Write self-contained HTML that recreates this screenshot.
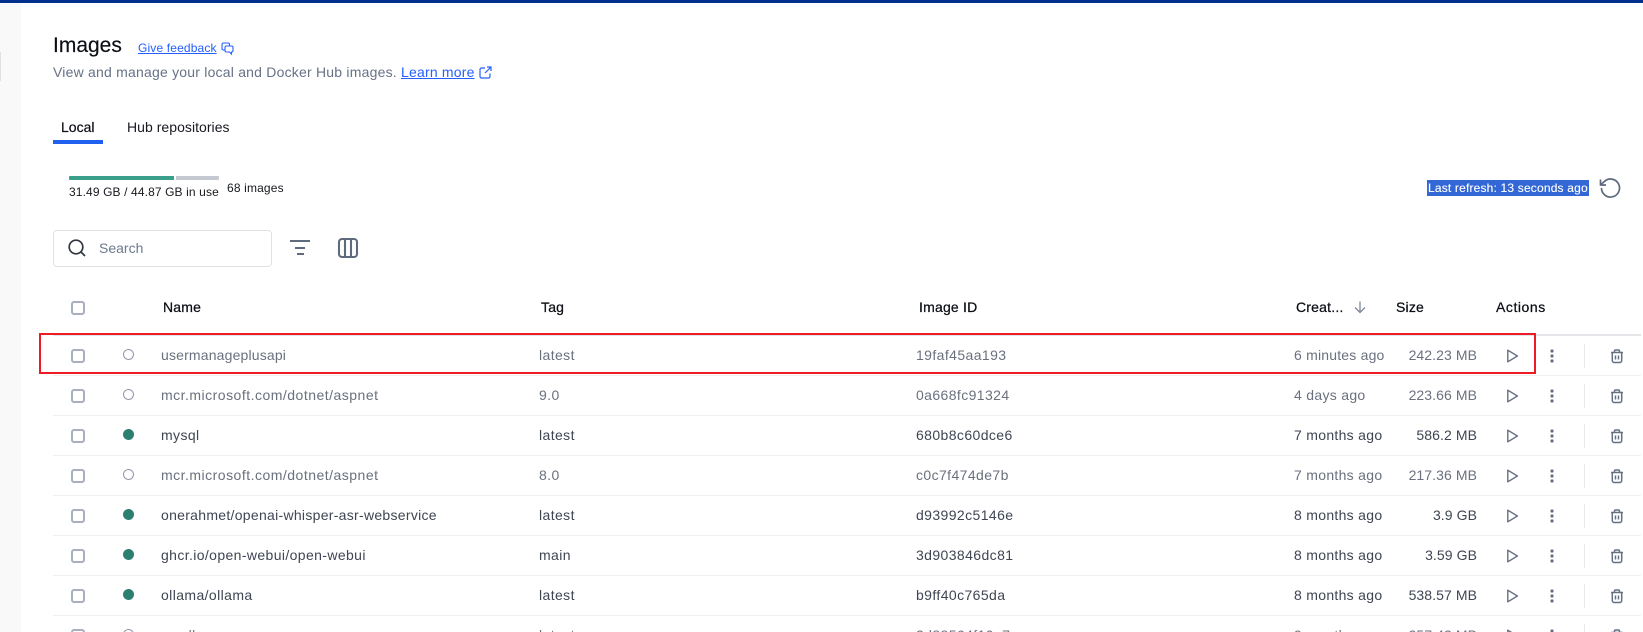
<!DOCTYPE html>
<html><head><meta charset="utf-8"><title>Images</title>
<style>
html,body{margin:0;padding:0;background:#fff;width:1643px;height:632px;overflow:hidden}
#p{position:absolute;left:0;top:0;width:1643px;height:632px;overflow:hidden;font-family:"Liberation Sans",Arial,sans-serif}
.a{position:absolute;white-space:nowrap}
.t{position:absolute;white-space:nowrap;line-height:20px;font-size:14px;letter-spacing:.4px;color:#3f4552}
.u{color:#6a707d}
.h{position:absolute;white-space:nowrap;top:297px;line-height:20px;font-size:14px;color:#0b0e14;-webkit-text-stroke:.25px #0b0e14;letter-spacing:.2px}
.line{position:absolute;left:53px;width:1588px;height:1px;background:#eeeff1}
.div{position:absolute;left:1584px;width:1px;height:24px;background:#e8e9ec}
.cb{position:absolute;left:71px;width:10px;height:10px;border:2px solid #a9afc0;border-radius:3px}
.dot{position:absolute;left:122.5px;width:11px;height:11px;border-radius:50%;box-sizing:border-box}
.on{background:#2c7f70}.off{border:1.3px solid #8f96a6;background:#fff}
.ic{position:absolute;overflow:visible}
.s{right:166px;letter-spacing:.08px}
.c{letter-spacing:.3px}
</style></head><body>
<div id="p">
<div class="a" style="left:0;top:0;width:1643px;height:3px;background:#00308f"></div>
<div class="a" style="left:0;top:3px;width:21px;height:629px;background:#f9f9fa"></div>
<div class="a" style="left:0;top:52px;width:1px;height:29px;background:#dfe0e4"></div>

<div class="a" style="left:53px;top:34px;font-size:21px;line-height:24px;color:#0b0e14;-webkit-text-stroke:.15px #0b0e14">Images</div>
<div class="a" style="left:138px;top:40px;font-size:12px;line-height:16px;color:#2560ff;text-decoration:underline;letter-spacing:.15px">Give feedback</div>
<svg class="ic" style="left:221px;top:42px" width="13" height="13" viewBox="0 0 13 13" fill="none" stroke="#2560ff" stroke-width="1.1"><path d="M8.500 4V2.500A1.500 1.500 0 0 0 7 1H2.500A1.500 1.500 0 0 0 1 2.500V6.500A1.500 1.500 0 0 0 2.500 8H4"/><path d="M5.500 4H10.500A1.500 1.500 0 0 1 12 5.500V8.500A1.500 1.500 0 0 1 10.500 10V12L8.500 10H5.500A1.500 1.500 0 0 1 4 8.500V5.500A1.500 1.500 0 0 1 5.500 4Z"/></svg>
<div class="a" style="left:53px;top:62px;font-size:14px;line-height:20px;color:#677285;letter-spacing:.21px">View and manage your local and Docker Hub images.</div>
<div class="a" style="left:401px;top:62px;font-size:14px;line-height:20px;color:#2560ff;text-decoration:underline;letter-spacing:.2px">Learn more</div>
<svg class="ic" style="left:479px;top:66px" width="13" height="13" viewBox="0 0 13 13" fill="none" stroke="#2560ff" stroke-width="1.2"><path d="M6 2H2.500A1.500 1.500 0 0 0 1 3.500V10.500A1.500 1.500 0 0 0 2.500 12H9.500A1.500 1.500 0 0 0 11 10.500V7.500"/><path d="M8 1H12V5M12 1L6 7"/></svg>

<div class="a" style="left:61px;top:117px;font-size:14px;line-height:20px;color:#0b0e14;-webkit-text-stroke:.2px #0b0e14">Local</div>
<div class="a" style="left:53px;top:140px;width:50px;height:4px;background:#2060ee"></div>
<div class="a" style="left:127px;top:117px;font-size:14px;line-height:20px;color:#17191f;letter-spacing:.04px">Hub repositories</div>

<div class="a" style="left:69px;top:176px;width:105px;height:4px;background:#3ba08b;border-radius:1px 0 0 1px"></div>
<div class="a" style="left:176px;top:176px;width:43px;height:4px;background:#c4c8d1;border-radius:0 1px 1px 0"></div>
<div class="a" style="left:69px;top:184px;font-size:12px;line-height:16px;color:#17191f;letter-spacing:.12px">31.49 GB / 44.87 GB in use</div>
<div class="a" style="left:227px;top:180px;font-size:12px;line-height:16px;color:#17191f;letter-spacing:.15px">68 images</div>

<div class="a" style="left:1427px;top:180px;width:162px;height:16px;background:#3367d6"></div>
<div class="a" style="left:1428px;top:180px;font-size:12px;line-height:16px;color:#fff;letter-spacing:.18px;-webkit-text-stroke:.12px #fff">Last refresh: 13 seconds ago</div>
<svg class="ic" style="left:1598px;top:177px" width="22" height="22" viewBox="0 0 22 22" fill="none" stroke="#5f6a7d" stroke-width="1.7"><path d="M3.500 11A9 9 0 1 0 6.200 4.600L2.500 8"/><path d="M2.500 2.500V8H8"/></svg>

<div class="a" style="left:53px;top:230px;width:217px;height:35px;border:1px solid #dfe1e5;border-radius:4px"></div>
<svg class="ic" style="left:67px;top:238px" width="20" height="20" viewBox="0 0 20 20" fill="none" stroke="#30353f" stroke-width="1.7"><circle cx="9" cy="9" r="6.800"/><path d="M14 14L18 18"/></svg>
<div class="a" style="left:99px;top:238px;font-size:14px;line-height:20px;color:#6c7a8e;letter-spacing:0">Search</div>
<svg class="ic" style="left:290px;top:238px" width="20" height="20" viewBox="0 0 20 20" fill="none" stroke="#5f6a7d" stroke-width="2"><path d="M0 3H20M5 10H15M7 16H14"/></svg>
<svg class="ic" style="left:338px;top:238px" width="20" height="20" viewBox="0 0 20 20" fill="none" stroke="#5f6a7d" stroke-width="2.100"><rect x="1" y="1" width="18" height="18" rx="3"/><path d="M7 1V19M13 1V19"/></svg>

<div class="cb" style="top:301px"></div>
<div class="h" style="left:163px">Name</div>
<div class="h" style="left:541px">Tag</div>
<div class="h" style="left:919px">Image ID</div>
<div class="h" style="left:1296px">Creat...</div>
<svg class="ic" style="left:1353px;top:300px" width="14" height="14" viewBox="0 0 14 14" fill="none" stroke="#7d8697" stroke-width="1.300"><path d="M7 1.500V12.500M2 7.500L7 12.500L12 7.500"/></svg>
<div class="h" style="left:1396px">Size</div>
<div class="h" style="left:1496px;letter-spacing:.55px">Actions</div>

<div class="a" style="left:53px;top:334px;width:1588px;height:2px;background:#e4e5e8"></div>

<!-- row 1 -->
<div class="cb" style="top:349px"></div><div class="dot off" style="top:349px"></div>
<div class="t u" style="left:161px;top:345px;letter-spacing:.17px">usermanageplusapi</div><div class="t u" style="left:539px;top:345px">latest</div><div class="t u" style="left:916px;top:345px">19faf45aa193</div><div class="t u c" style="left:1294px;top:345px;letter-spacing:.2px">6 minutes ago</div><div class="t u s" style="top:345px">242.23 MB</div>
<!-- row 2 -->
<div class="cb" style="top:389px"></div><div class="dot off" style="top:389px"></div>
<div class="t u" style="left:161px;top:385px;letter-spacing:.49px">mcr.microsoft.com/dotnet/aspnet</div><div class="t u" style="left:539px;top:385px">9.0</div><div class="t u" style="left:916px;top:385px">0a668fc91324</div><div class="t u c" style="left:1294px;top:385px">4 days ago</div><div class="t u s" style="top:385px">223.66 MB</div>
<!-- row 3 -->
<div class="cb" style="top:429px"></div><div class="dot on" style="top:429px"></div>
<div class="t" style="left:161px;top:425px">mysql</div><div class="t" style="left:539px;top:425px">latest</div><div class="t" style="left:916px;top:425px">680b8c60dce6</div><div class="t c" style="left:1294px;top:425px">7 months ago</div><div class="t s" style="top:425px">586.2 MB</div>
<!-- row 4 -->
<div class="cb" style="top:469px"></div><div class="dot off" style="top:469px"></div>
<div class="t u" style="left:161px;top:465px;letter-spacing:.49px">mcr.microsoft.com/dotnet/aspnet</div><div class="t u" style="left:539px;top:465px">8.0</div><div class="t u" style="left:916px;top:465px">c0c7f474de7b</div><div class="t u c" style="left:1294px;top:465px">7 months ago</div><div class="t u s" style="top:465px">217.36 MB</div>
<!-- row 5 -->
<div class="cb" style="top:509px"></div><div class="dot on" style="top:509px"></div>
<div class="t" style="left:161px;top:505px;letter-spacing:.29px">onerahmet/openai-whisper-asr-webservice</div><div class="t" style="left:539px;top:505px">latest</div><div class="t" style="left:916px;top:505px">d93992c5146e</div><div class="t c" style="left:1294px;top:505px">8 months ago</div><div class="t s" style="top:505px">3.9 GB</div>
<!-- row 6 -->
<div class="cb" style="top:549px"></div><div class="dot on" style="top:549px"></div>
<div class="t" style="left:161px;top:545px;letter-spacing:.38px">ghcr.io/open-webui/open-webui</div><div class="t" style="left:539px;top:545px">main</div><div class="t" style="left:916px;top:545px">3d903846dc81</div><div class="t c" style="left:1294px;top:545px">8 months ago</div><div class="t s" style="top:545px">3.59 GB</div>
<!-- row 7 -->
<div class="cb" style="top:589px"></div><div class="dot on" style="top:589px"></div>
<div class="t" style="left:161px;top:585px">ollama/ollama</div><div class="t" style="left:539px;top:585px">latest</div><div class="t" style="left:916px;top:585px">b9ff40c765da</div><div class="t c" style="left:1294px;top:585px">8 months ago</div><div class="t s" style="top:585px">538.57 MB</div>
<!-- row 8 (clipped by the viewport) -->
<div class="cb" style="top:629px"></div><div class="dot off" style="top:629px"></div>
<div class="t u" style="left:161px;top:625px">small</div><div class="t u" style="left:539px;top:625px">latest</div><div class="t u" style="left:916px;top:625px">2d88564f10e7</div><div class="t u c" style="left:1294px;top:625px">9 months ago</div><div class="t u s" style="top:625px">357.42 MB</div>

<div class="line" style="top:375px"></div><div class="line" style="top:415px"></div><div class="line" style="top:455px"></div><div class="line" style="top:495px"></div><div class="line" style="top:535px"></div><div class="line" style="top:575px"></div><div class="line" style="top:615px"></div>

<div class="div" style="top:344px"></div><div class="div" style="top:384px"></div><div class="div" style="top:424px"></div><div class="div" style="top:464px"></div><div class="div" style="top:504px"></div><div class="div" style="top:544px"></div><div class="div" style="top:584px"></div><div class="div" style="top:624px"></div>

<svg class="ic" style="left:0;top:0" width="1643" height="632" viewBox="0 0 1643 632">
<defs>
<g id="acts" fill="none" stroke="#667085">
<path d="M1507.800 350.200V361.800L1517.400 356Z" stroke-width="1.400" stroke-linejoin="round"/>
<circle cx="1552" cy="351" r="1.600" fill="#667085" stroke="none"/><circle cx="1552" cy="356" r="1.600" fill="#667085" stroke="none"/><circle cx="1552" cy="361" r="1.600" fill="#667085" stroke="none"/>
<path d="M1611 352.500H1623M1614.500 352.500V351A1 1 0 0 1 1615.500 350H1618.500A1 1 0 0 1 1619.500 351V352.500M1612.300 352.500V360.500A2 2 0 0 0 1614.300 362.500H1619.700A2 2 0 0 0 1621.700 360.500V352.500M1615.500 355.500V359.500M1618.500 355.500V359.500" stroke-width="1.500"/>
</g>
</defs>
<use href="#acts"/><use href="#acts" y="40"/><use href="#acts" y="80"/><use href="#acts" y="120"/><use href="#acts" y="160"/><use href="#acts" y="200"/><use href="#acts" y="240"/><use href="#acts" y="280"/>
</svg>

<div class="a" style="left:39px;top:333px;width:1493px;height:37px;border:2px solid #ed1c24"></div>
</div>
</body></html>
